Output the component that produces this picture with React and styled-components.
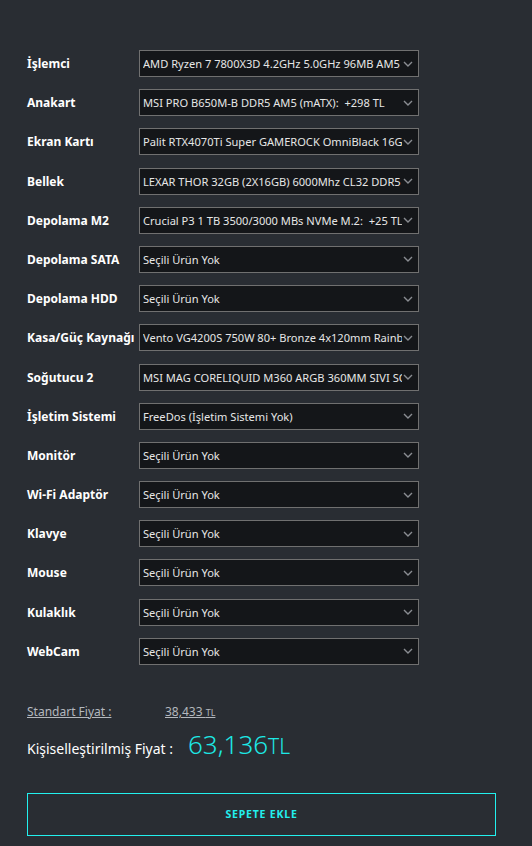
import React from "react";
import styled, { createGlobalStyle } from "styled-components";

const GlobalStyle = createGlobalStyle`
    html, body {
        margin: 0;
        padding: 0;
        background: #292d33;
    }
    body {
        font-family: "Noto Sans", "Open Sans", Arial, sans-serif;
        color: #ffffff;
    }
`;

const parts = [
    { label: "İşlemci", value: "AMD Ryzen 7 7800X3D 4.2GHz 5.0GHz 96MB AM5 '120W" },
    { label: "Anakart", value: "MSI PRO B650M-B DDR5 AM5 (mATX):  +298 TL" },
    { label: "Ekran Kartı", value: "Palit RTX4070Ti Super GAMEROCK OmniBlack 16GB GDDR6X" },
    { label: "Bellek", value: "LEXAR THOR 32GB (2X16GB) 6000Mhz CL32 DDR5" },
    { label: "Depolama M2", value: "Crucial P3 1 TB 3500/3000 MBs NVMe M.2:  +25 TL" },
    { label: "Depolama SATA", value: "Seçili Ürün Yok" },
    { label: "Depolama HDD", value: "Seçili Ürün Yok" },
    { label: "Kasa/Güç Kaynağı", value: "Vento VG4200S 750W 80+ Bronze 4x120mm Rainbow Fan" },
    { label: "Soğutucu 2", value: "MSI MAG CORELIQUID M360 ARGB 360MM SIVI SOĞUTUCU" },
    { label: "İşletim Sistemi", value: "FreeDos (İşletim Sistemi Yok)" },
    { label: "Monitör", value: "Seçili Ürün Yok" },
    { label: "Wi-Fi Adaptör", value: "Seçili Ürün Yok" },
    { label: "Klavye", value: "Seçili Ürün Yok" },
    { label: "Mouse", value: "Seçili Ürün Yok" },
    { label: "Kulaklık", value: "Seçili Ürün Yok" },
    { label: "WebCam", value: "Seçili Ürün Yok" },
];

const Chevron = () => (
    <svg width="10" height="6" viewBox="0 0 10 6">
        <path d="M1 1 L5 5 L9 1" fill="none" stroke="#8a8d92" strokeWidth="1.4" />
    </svg>
);

const App = () => {
    return (
        <>
            <GlobalStyle />
            <Page>
                <Form>
                    {parts.map((p) => (
                        <Row key={p.label}>
                            <Label>{p.label}</Label>
                            <Select>
                                <SelectText>{p.value}</SelectText>
                                <Arrow>
                                    <Chevron />
                                </Arrow>
                            </Select>
                        </Row>
                    ))}
                </Form>
                <Prices>
                    <StandardLine>
                        <StandardLabel>Standart Fiyat :</StandardLabel>
                        <StandardValue>
                            38,433 <small>TL</small>
                        </StandardValue>
                    </StandardLine>
                    <CustomLine>
                        <CustomLabel>Kişiselleştirilmiş Fiyat :</CustomLabel>
                        <CustomValue>
                            63,136<span>TL</span>
                        </CustomValue>
                    </CustomLine>
                </Prices>
                <AddButton>SEPETE EKLE</AddButton>
            </Page>
        </>
    );
};

const Page = styled.div`
    width: 532px;
    height: 846px;
    box-sizing: border-box;
    padding: 50px 37px 0 27px;
    background: #292d33;
    overflow: hidden;
`;

const Form = styled.div`
    display: flex;
    flex-direction: column;
    gap: 12.2px;
`;

const Row = styled.div`
    display: flex;
    align-items: center;
`;

const Label = styled.div`
    width: 112px;
    flex-shrink: 0;
    font-size: 12px;
    font-weight: 700;
    color: #ffffff;
    white-space: nowrap;
`;

const Select = styled.div`
    position: relative;
    width: 280px;
    height: 27px;
    box-sizing: border-box;
    border: 1px solid #707070;
    background: #141619;
    display: flex;
    align-items: center;
    padding: 0 16px 0 3px;
`;

const SelectText = styled.div`
    font-size: 11.1px;
    color: #e6e6e6;
    white-space: pre;
    overflow: hidden;
    flex: 1;
`;

const Arrow = styled.span`
    position: absolute;
    right: 5px;
    top: 50%;
    transform: translateY(-50%);
    display: flex;
`;

const Prices = styled.div`
    margin-top: 38px;
    display: flex;
    flex-direction: column;
`;

const StandardLine = styled.div`
    display: flex;
    align-items: baseline;
    font-size: 12px;
    color: #b4b8be;
`;

const StandardLabel = styled.span`
    width: 138px;
    text-decoration: underline;
`;

const StandardValue = styled.span`
    text-decoration: underline;
    small {
        font-size: 9px;
    }
`;

const CustomLine = styled.div`
    display: flex;
    align-items: baseline;
    margin-top: 6px;
`;

const CustomLabel = styled.span`
    width: 161px;
    font-size: 14px;
    color: #ffffff;
`;

const CustomValue = styled.span`
    font-size: 26px;
    font-weight: 300;
    color: #1de9e6;
    span {
        font-size: 21px;
    }
`;

const AddButton = styled.button`
    display: block;
    margin-top: 31px;
    width: 469px;
    height: 43px;
    background: transparent;
    border: 1px solid #22f0ee;
    color: #22f0ee;
    font-family: "Noto Sans", Arial, sans-serif;
    font-size: 10.5px;
    font-weight: 700;
    letter-spacing: 0.8px;
    cursor: pointer;
`;

export default App;
